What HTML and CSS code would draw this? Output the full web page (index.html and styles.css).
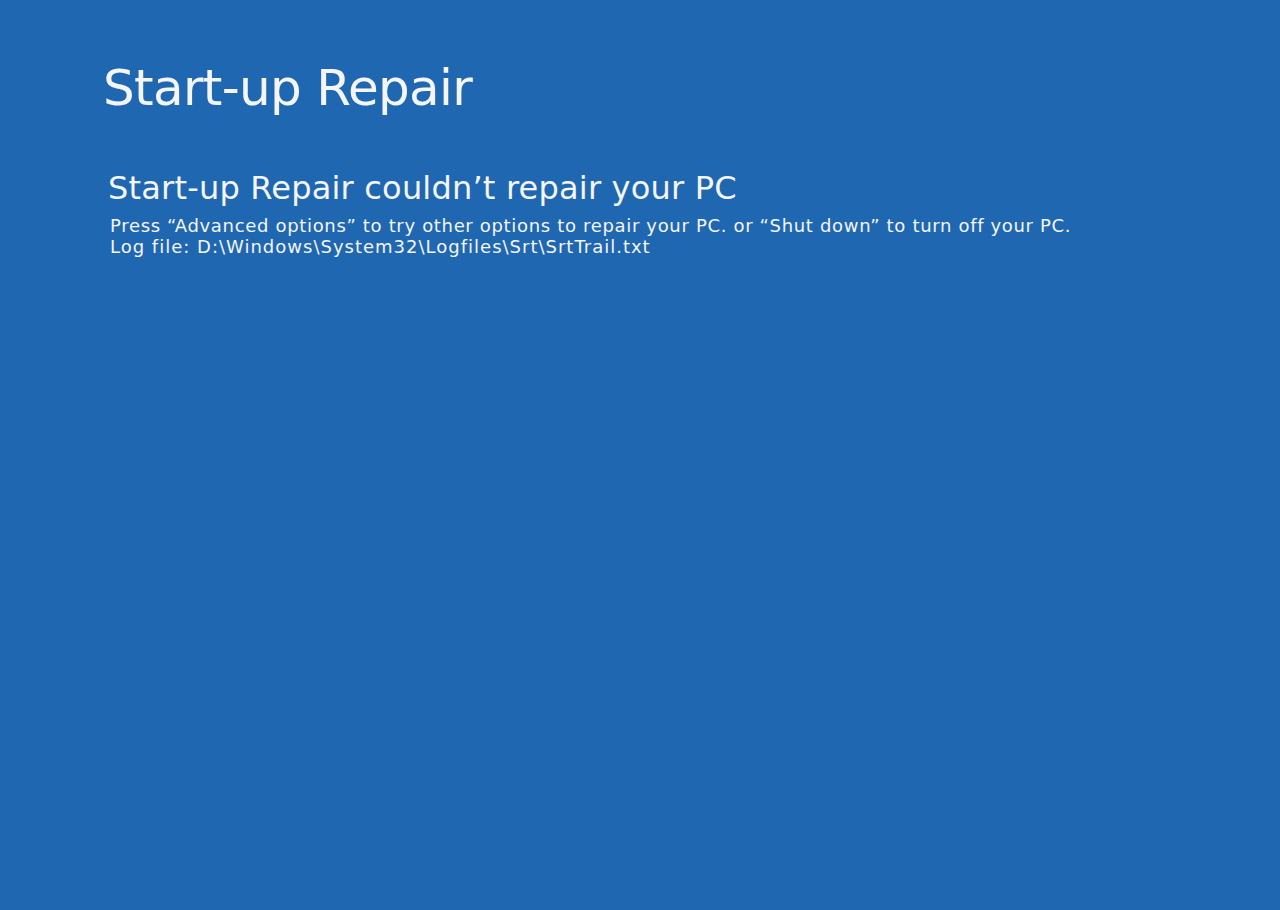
FILE: index.html
```html
<!DOCTYPE html>
<html lang="en">
<head>
<meta charset="utf-8">
<title>Start-up Repair</title>
<link rel="stylesheet" href="styles.css">
</head>
<body>
<main class="screen">
  <h1 class="title">Start-up Repair</h1>
  <section class="message">
    <h2 class="heading">Start-up Repair couldn’t repair your PC</h2>
    <p class="line">Press “Advanced options” to try other options to repair your PC. or “Shut down” to turn off your PC.</p>
    <p class="line line-path">Log file: D:\Windows\System32\Logfiles\Srt\SrtTrail.txt</p>
  </section>
</main>
</body>
</html>
```
FILE: styles.css
```css
html, body {
  margin: 0;
  padding: 0;
  width: 100%;
  height: 100%;
  background: #1f67b1;
}
body {
  font-family: "DejaVu Sans", Verdana, sans-serif;
  color: #f5f5f5;
}
.screen {
  padding: 58px 0 0 103px;
}
.title {
  margin: 0;
  font-size: 50px;
  font-weight: normal;
  line-height: 60px;
  letter-spacing: -0.7px;
}
.message {
  padding: 52px 0 0 5px;
}
.heading {
  margin: 0 0 9px 0;
  font-size: 32px;
  font-weight: normal;
  line-height: 36px;
  letter-spacing: 0.2px;
}
.line {
  margin: 0 0 0 2px;
  font-size: 18px;
  line-height: 21px;
  letter-spacing: 0.67px;
}
.line-path {
  letter-spacing: 1px;
}
```
